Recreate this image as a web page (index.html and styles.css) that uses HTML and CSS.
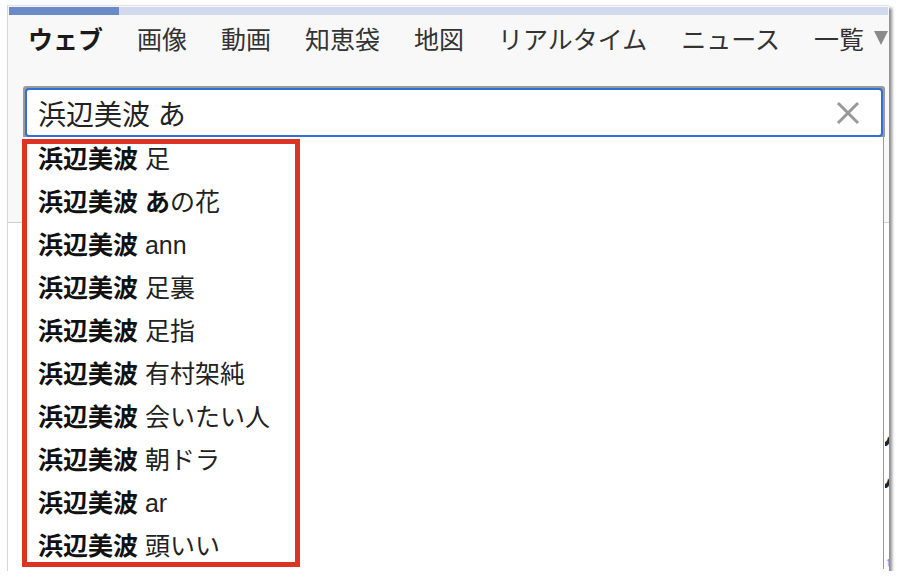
FILE: index.html
```html
<!DOCTYPE html>
<html lang="ja">
<head>
    <meta charset="UTF-8">
    <meta name="viewport" content="width=device-width, initial-scale=1.0">
    <title>浜辺美波 あ - 検索</title>
    <link rel="stylesheet" href="styles.css">
</head>
<body>
    <div class="window">
        <div class="progress"><div class="progress-done"></div></div>

        <nav class="tabs">
            <span class="tab active">ウェブ</span>
            <span class="tab">画像</span>
            <span class="tab">動画</span>
            <span class="tab">知恵袋</span>
            <span class="tab">地図</span>
            <span class="tab">リアルタイム</span>
            <span class="tab">ニュース</span>
            <span class="tab more">一覧<span class="caret"></span></span>
        </nav>

        <div class="search-frame">
            <div class="search-box">
                <span class="query">浜辺美波 あ</span>
                <svg class="clear" width="26" height="26" viewBox="0 0 26 26">
                    <path d="M3 3 L23 23 M23 3 L3 23" stroke="#999" stroke-width="3" fill="none"/>
                </svg>
            </div>
        </div>

        <!-- page content behind the suggestion list -->
        <section class="results">
            <div class="results-edge">
                <span class="edge-text">い</span>
                <span class="edge-text">い</span>
                <span class="edge-top">↑</span>
            </div>
        </section>

        <ul class="suggest">
            <li><b>浜辺美波</b> 足</li>
            <li><b>浜辺美波 あ</b>の花</li>
            <li><b>浜辺美波</b> ann</li>
            <li><b>浜辺美波</b> 足裏</li>
            <li><b>浜辺美波</b> 足指</li>
            <li><b>浜辺美波</b> 有村架純</li>
            <li><b>浜辺美波</b> 会いたい人</li>
            <li><b>浜辺美波</b> 朝ドラ</li>
            <li><b>浜辺美波</b> ar</li>
            <li><b>浜辺美波</b> 頭いい</li>
        </ul>

        <div class="highlight"></div>
    </div>
</body>
</html>
```

FILE: styles.css
```css
body {
    margin: 0;
    background: #fff;
    font-family: "Liberation Sans", "Noto Sans CJK JP", sans-serif;
    color: #222;
}

.window {
    position: relative;
    margin: 5px 0 0 7px;
    width: 881px;
    height: 565px;
    border-left: 1px solid #d8d8d8;
    border-top: 1px solid #e2e2e2;
    background: #f8f8f8;
    box-shadow: 3px 3px 3px rgba(0, 0, 0, 0.45);
    overflow: hidden;
    display: flex;
    flex-direction: column;
}

.progress {
    margin: 1px 1px 0 1px;
    height: 8px;
    background: #d0daec;
}

.progress-done {
    width: 110px;
    height: 100%;
    background: #6a8bc7;
}

.tabs {
    display: flex;
    align-items: center;
    gap: 34px;
    padding: 8px 0 0 20px;
    height: 30px;
    font-size: 25px;
    color: #333;
    white-space: nowrap;
}

.tab.active {
    font-weight: bold;
    color: #1a1a1a;
}

.tab.more {
    display: flex;
    align-items: center;
}

.caret {
    margin-left: 10px;
    width: 0;
    height: 0;
    border-left: 7px solid transparent;
    border-right: 7px solid transparent;
    border-top: 14px solid #8a8a8a;
}

.search-frame {
    margin: 33px 0 0 15px;
    width: 862px;
    padding: 2px 2px 0 2px;
    box-sizing: border-box;
    background: #9a9a9a;
    border-radius: 3px 3px 0 0;
}

.search-box {
    display: flex;
    align-items: center;
    justify-content: space-between;
    height: 49px;
    box-sizing: border-box;
    padding: 0 20px 0 11px;
    background: #fff;
    border: 2px solid #2f6fd8;
    border-radius: 4px;
}

.query {
    font-size: 28px;
    color: #222;
}

.results {
    flex: 1;
    margin-top: 85px;
    border-top: 1px solid #cfcfcf;
    background: #fff;
    display: flex;
    justify-content: flex-end;
}

.results-edge {
    display: flex;
    flex-direction: column;
    width: 8px;
    margin-right: -4px;
    overflow: hidden;
    font-size: 26px;
    line-height: 42px;
    padding-top: 192px;
}

.edge-text {
    margin-left: -9px;
    font-weight: bold;
}

.edge-top {
    margin-top: 56px;
    font-size: 13px;
    line-height: 14px;
    color: #5566dd;
}

.suggest {
    position: absolute;
    left: 17px;
    top: 131px;
    width: 858px;
    height: 431px;
    margin: 0;
    padding: 1px 0 0 0;
    list-style: none;
    background: #fff;
    border-right: 1px solid #9a9a9a;
    font-size: 25px;
    color: #222;
}

.suggest li {
    height: 43px;
    line-height: 43px;
    padding-left: 13px;
    white-space: nowrap;
}

.suggest b {
    color: #111;
}

.highlight {
    position: absolute;
    left: 14px;
    top: 133px;
    width: 268px;
    height: 418px;
    border: 5px solid #dc3423;
}
```
